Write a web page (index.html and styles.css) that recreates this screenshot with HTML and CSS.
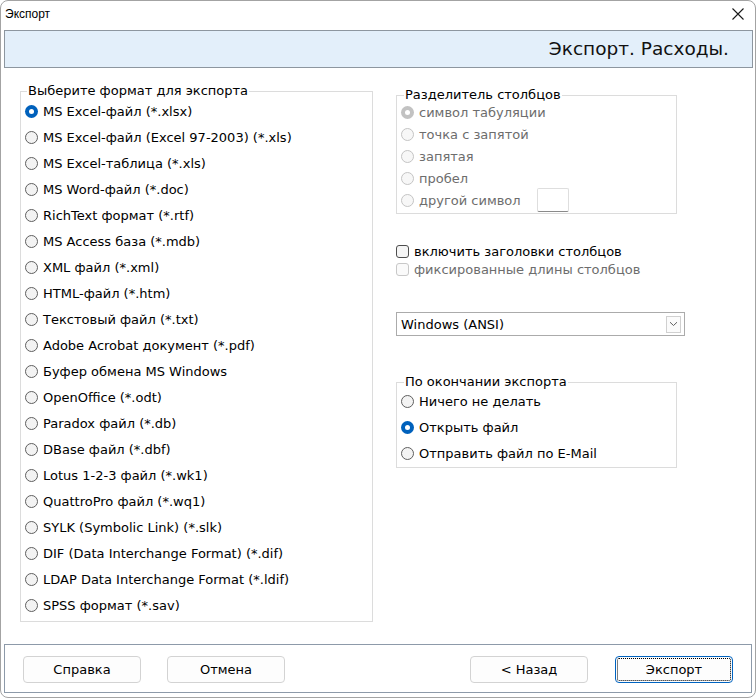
FILE: index.html
```html
<!DOCTYPE html>
<html lang="ru">
<head>
<meta charset="utf-8">
<title>Экспорт</title>
<link rel="stylesheet" href="styles.css">
</head>
<body>
<div class="window">
  <div class="titlebar">
    <span class="title">Экспорт</span>
    <svg class="close" width="12" height="12" viewBox="0 0 12 12"><path d="M0.5 0.5 L11.5 11.5 M11.5 0.5 L0.5 11.5" stroke="#1a1a1a" stroke-width="1.1" fill="none"/></svg>
  </div>
  <div class="header">Экспорт. Расходы.</div>
  <div class="main">
    <fieldset class="group formats">
      <legend>Выберите формат для экспорта</legend>
      <div class="row"><span class="radio checked"></span>MS Excel-файл (*.xlsx)</div>
      <div class="row"><span class="radio"></span>MS Excel-файл (Excel 97-2003) (*.xls)</div>
      <div class="row"><span class="radio"></span>MS Excel-таблица (*.xls)</div>
      <div class="row"><span class="radio"></span>MS Word-файл (*.doc)</div>
      <div class="row"><span class="radio"></span>RichText формат (*.rtf)</div>
      <div class="row"><span class="radio"></span>MS Access база (*.mdb)</div>
      <div class="row"><span class="radio"></span>XML файл (*.xml)</div>
      <div class="row"><span class="radio"></span>HTML-файл (*.htm)</div>
      <div class="row"><span class="radio"></span>Текстовый файл (*.txt)</div>
      <div class="row"><span class="radio"></span>Adobe Acrobat документ (*.pdf)</div>
      <div class="row"><span class="radio"></span>Буфер обмена MS Windows</div>
      <div class="row"><span class="radio"></span>OpenOffice (*.odt)</div>
      <div class="row"><span class="radio"></span>Paradox файл (*.db)</div>
      <div class="row"><span class="radio"></span>DBase файл (*.dbf)</div>
      <div class="row"><span class="radio"></span>Lotus 1-2-3 файл (*.wk1)</div>
      <div class="row"><span class="radio"></span>QuattroPro файл (*.wq1)</div>
      <div class="row"><span class="radio"></span>SYLK (Symbolic Link) (*.slk)</div>
      <div class="row"><span class="radio"></span>DIF (Data Interchange Format) (*.dif)</div>
      <div class="row"><span class="radio"></span>LDAP Data Interchange Format (*.ldif)</div>
      <div class="row"><span class="radio"></span>SPSS формат (*.sav)</div>
    </fieldset>
    <div class="side">
      <fieldset class="group separator">
        <legend>Разделитель столбцов</legend>
        <div class="row small disabled"><span class="radio checked"></span>символ табуляции</div>
        <div class="row small disabled"><span class="radio"></span>точка с запятой</div>
        <div class="row small disabled"><span class="radio"></span>запятая</div>
        <div class="row small disabled"><span class="radio"></span>пробел</div>
        <div class="row small disabled"><span class="radio"></span><span class="other-label">другой символ</span><span class="charbox"></span></div>
      </fieldset>
      <div class="checks">
        <div class="crow"><span class="checkbox"></span>включить заголовки столбцов</div>
        <div class="crow disabled"><span class="checkbox"></span>фиксированные длины столбцов</div>
      </div>
      <div class="combo">
        <span class="combo-text">Windows (ANSI)</span>
        <span class="combo-btn"><svg width="9" height="6" viewBox="0 0 9 6"><path d="M1 1.2 L4.5 4.5 L8 1.2" stroke="#606060" stroke-width="1" fill="none"/></svg></span>
      </div>
      <fieldset class="group after">
        <legend>По окончании экспорта</legend>
        <div class="row"><span class="radio"></span>Ничего не делать</div>
        <div class="row"><span class="radio checked"></span>Открыть файл</div>
        <div class="row"><span class="radio"></span>Отправить файл по E-Mail</div>
      </fieldset>
    </div>
  </div>
  <div class="footer">
    <button class="btn">Справка</button>
    <button class="btn">Отмена</button>
    <span class="spacer"></span>
    <button class="btn">&lt; Назад</button>
    <button class="btn primary">Экспорт</button>
  </div>
</div>
</body>
</html>
```
FILE: styles.css
```css
* { box-sizing: border-box; }
html, body { margin: 0; padding: 0; background: #ffffff; }
body {
  font-family: "DejaVu Sans", Verdana, sans-serif;
  font-size: 13px;
  color: #000;
}
.window {
  width: 756px;
  height: 698px;
  border: 1px solid #a3a3a3;
  border-radius: 8px;
  background: #fff;
  display: flex;
  flex-direction: column;
  overflow: hidden;
}
.titlebar {
  height: 29px;
  display: flex;
  align-items: center;
  padding: 0 11px 3px 4px;
  justify-content: space-between;
}
.title {
  font-family: "Liberation Sans", Arial, sans-serif;
  font-size: 12px;
  color: #000;
}
.close { display: block; }
.header {
  height: 38px;
  margin: 0 2px 0 3px;
  border: 1px solid #8d969f;
  background: #e3effa;
  display: flex;
  align-items: center;
  justify-content: flex-end;
  padding: 0 23px 1px 0;
  font-size: 18.5px;
  color: #111;
}
.main {
  flex: 1;
  display: flex;
  align-items: flex-start;
}
.group {
  margin: 0;
  padding: 0;
  border: 1px solid #dcdcdc;
  min-width: 0;
}
.group legend {
  padding: 0 1px;
  line-height: 12px;
  font-size: 13px;
  color: #000;
}
.formats {
  width: 353px;
  margin: 16px 0 0 19px;
  padding: 0 0 3px 4px;
}
.formats legend { line-height: 14px; margin-left: 2px; }
.row {
  height: 26px;
  display: flex;
  align-items: center;
  white-space: nowrap;
}
.row.small { height: 22px; }
.radio {
  width: 13px;
  height: 13px;
  border-radius: 50%;
  border: 1px solid #5f5f5f;
  background: #f3f3f3;
  margin-right: 5px;
  flex: none;
  position: relative;
}
.radio.checked {
  border: none;
  background: #0061bc;
}
.radio.checked::after {
  content: "";
  position: absolute;
  left: 4px;
  top: 4px;
  width: 5px;
  height: 5px;
  border-radius: 50%;
  background: #fff;
}
.disabled { color: #6d6d6d; }
.disabled .radio { border-color: #c4c4c4; background: #f7f7f7; }
.disabled .radio.checked { background: #c2c2c2; border: none; }
.side {
  width: 290px;
  margin-left: 23px;
  display: flex;
  flex-direction: column;
}
.separator {
  width: 281px;
  margin-top: 21px;
  padding: 0 0 2px 4px;
}
.separator legend { margin-left: 3px; }
.other-label { width: 118px; }
.charbox {
  width: 32px;
  height: 24px;
  border: 1px solid #dedede;
  border-bottom-color: #8a8a8a;
  border-radius: 2px;
  background: #fff;
  flex: none;
}
.checks {
  margin-top: 28px;
}
.crow {
  height: 18px;
  display: flex;
  align-items: center;
  white-space: nowrap;
}
.checkbox {
  width: 13px;
  height: 13px;
  border: 1px solid #4e4e4e;
  border-radius: 3px;
  background: #f5f5f5;
  margin-right: 5px;
  flex: none;
}
.crow.disabled .checkbox { border-color: #c8c8c8; background: #fafafa; }
.combo {
  margin-top: 34px;
  width: 289px;
  height: 24px;
  border: 1px solid #ababab;
  display: flex;
  align-items: center;
  justify-content: space-between;
  padding: 0 3px 0 4px;
  background: #fff;
}
.combo-btn {
  width: 15px;
  height: 17px;
  border: 1px solid #d0d0d0;
  background: #fbfbfb;
  display: flex;
  align-items: center;
  justify-content: center;
}
.combo-btn svg { display: block; }
.after {
  width: 281px;
  margin-top: 40px;
  padding: 0 0 1px 4px;
}
.after legend { margin-left: 3px; }
.footer {
  height: 49px;
  margin: 0 3px 4px 3px;
  border: 1px solid #8d9aa9;
  display: flex;
  align-items: center;
  padding: 1px 18px 0 18px;
  gap: 26px;
}
.spacer { flex: 1; }
.btn {
  width: 118px;
  height: 27px;
  font-family: "DejaVu Sans", Verdana, sans-serif;
  font-size: 13px;
  color: #000;
  background: #fdfdfd;
  border: 1px solid #d3d3d3;
  border-radius: 4px;
  padding: 0;
  margin: 0;
}
.btn.primary {
  border: 1px solid #0063c0;
  outline: 1px dotted #000;
  outline-offset: -3px;
  margin-left: 1px;
}
```
